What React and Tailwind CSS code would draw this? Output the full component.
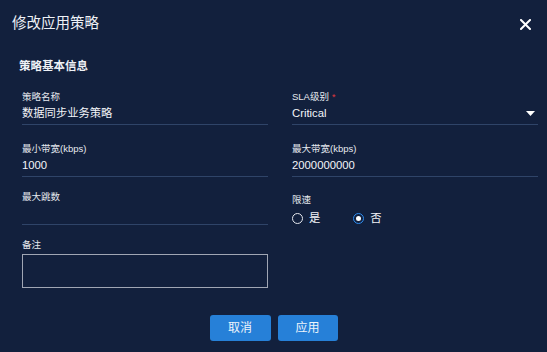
import React from "react";

const font = { fontFamily: '"Liberation Sans", "Noto Sans CJK SC", sans-serif' };

function Field({ label, value, required, caret }) {
  return (
    <div className="flex flex-col">
      <div className="h-[12px] text-[9.5px] leading-[12px] text-[#e6e9ef] flex items-center">
        {label}
        {required && <span className="ml-[3px] text-[#e0383e] text-[9px] leading-[12px]">*</span>}
      </div>
      <div className="mt-[2px] h-[16px] flex items-center justify-between text-[11.3px] leading-[16px] text-[#f2f4f8]">
        <span>{value}</span>
        {caret && (
          <svg width="9" height="5" viewBox="0 0 9 5" className="mr-[3px]">
            <path d="M0 0 H9 L4.5 5 Z" fill="#ffffff" />
          </svg>
        )}
      </div>
      <div className="mt-[3px] h-px bg-[#2f4468]" />
    </div>
  );
}

export default function App() {
  return (
    <div className="w-[547px] h-[352px] bg-[#12203d] overflow-hidden" style={font}>
      <div className="flex items-start justify-between pl-[12px] pr-[16px] pt-[13px]">
        <div className="text-[14.5px] leading-[20px] text-[#eef1f6]">修改应用策略</div>
        <svg width="11" height="11" viewBox="0 0 11 11" className="mt-[6px]">
          <path d="M1 1 L10 10 M10 1 L1 10" stroke="#ffffff" strokeWidth="2" strokeLinecap="square" />
        </svg>
      </div>
      <div className="pl-[19px] mt-[25px] text-[11.5px] leading-[16px] font-bold text-[#eef1f6]">策略基本信息</div>
      <div className="pl-[22px] pr-[9px] mt-[17px] grid grid-cols-[246px_246px] gap-x-[24px]">
        <div className="flex flex-col">
          <Field label="策略名称" value="数据同步业务策略" />
          <div className="mt-[18px]"><Field label="最小带宽(kbps)" value="1000" /></div>
          <div className="mt-[14px]"><Field label="最大跳数" value="" /></div>
          <div className="mt-[14px] h-[12px] text-[9.5px] leading-[12px] text-[#e6e9ef]">备注</div>
          <div className="mt-[3px] h-[34px] border border-[#a0a6b4] bg-[#12203d]" />
        </div>
        <div className="flex flex-col">
          <Field label="SLA级别" value="Critical" required caret />
          <div className="mt-[18px]"><Field label="最大带宽(kbps)" value="2000000000" /></div>
          <div className="mt-[17px] h-[12px] text-[9.5px] leading-[12px] text-[#e6e9ef]">限速</div>
          <div className="mt-[4px] h-[16px] flex items-center text-[11.3px] leading-[16px] text-[#f2f4f8]">
            <span className="w-[11px] h-[11px] rounded-full border border-[#e6e9ef] box-border" />
            <span className="ml-[6px]">是</span>
            <span className="ml-[33px] w-[11px] h-[11px] rounded-full border-[1.5px] border-[#2d8cf0] flex items-center justify-center box-border">
              <span className="w-[5px] h-[5px] rounded-full bg-white" />
            </span>
            <span className="ml-[6px]">否</span>
          </div>
        </div>
      </div>
      <div className="mt-[27px] flex justify-center gap-[7px]">
        <button className="w-[61px] h-[26px] rounded-[3px] bg-[#2680d8] text-[12px] leading-[26px] text-[#eef4fb]">取消</button>
        <button className="w-[60px] h-[26px] rounded-[3px] bg-[#2680d8] text-[12px] leading-[26px] text-[#eef4fb]">应用</button>
      </div>
    </div>
  );
}
